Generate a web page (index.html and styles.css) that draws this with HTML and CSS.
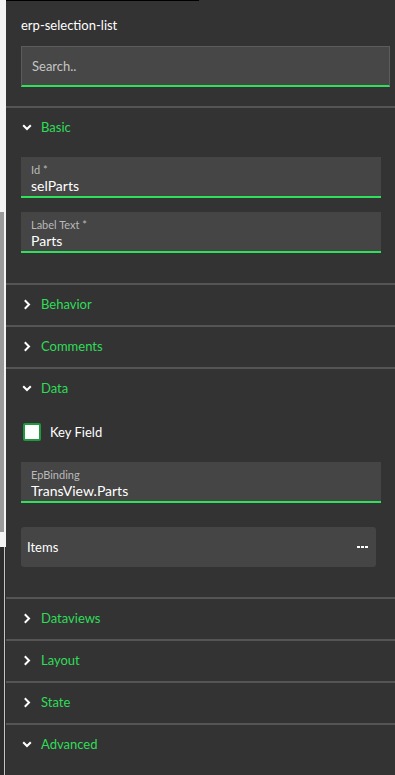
FILE: index.html
```html
<!DOCTYPE html>
<html lang="en">
<head>
    <meta charset="UTF-8">
    <meta name="viewport" content="width=device-width, initial-scale=1.0">
    <title>Properties</title>
    <link rel="stylesheet" href="styles.css">
</head>
<body>
    <div class="app">
        <div class="backdrop">
            <div class="bd-top"></div>
            <div class="bd-gray"></div>
            <div class="bd-white"></div>
            <div class="bd-dark"></div>
        </div>

        <div class="panel">
            <div class="topline"></div>
            <div class="panel-head">
                <div class="title">erp-selection-list</div>
                <input class="search" type="text" placeholder="Search..">
            </div>

            <section class="group">
                <div class="group-head">
                    <span class="chev"><svg width="10" height="7" viewBox="0 0 10 7"><path d="M1.2 1.2 L5 5 L8.8 1.2" fill="none" stroke="#fff" stroke-width="2"/></svg></span>
                    <span class="group-name">Basic</span>
                </div>
                <div class="group-body basic">
                    <div class="field">
                        <div class="field-label">Id *</div>
                        <div class="field-value">selParts</div>
                    </div>
                    <div class="field">
                        <div class="field-label">Label Text *</div>
                        <div class="field-value">Parts</div>
                    </div>
                </div>
            </section>

            <section class="group">
                <div class="group-head">
                    <span class="chev"><svg width="8" height="11" viewBox="0 0 8 11"><path d="M1.8 1.3 L6 5.5 L1.8 9.7" fill="none" stroke="#fff" stroke-width="2"/></svg></span>
                    <span class="group-name">Behavior</span>
                </div>
            </section>

            <section class="group">
                <div class="group-head">
                    <span class="chev"><svg width="8" height="11" viewBox="0 0 8 11"><path d="M1.8 1.3 L6 5.5 L1.8 9.7" fill="none" stroke="#fff" stroke-width="2"/></svg></span>
                    <span class="group-name">Comments</span>
                </div>
            </section>

            <section class="group">
                <div class="group-head">
                    <span class="chev"><svg width="10" height="7" viewBox="0 0 10 7"><path d="M1.2 1.2 L5 5 L8.8 1.2" fill="none" stroke="#fff" stroke-width="2"/></svg></span>
                    <span class="group-name">Data</span>
                </div>
                <div class="group-body data">
                    <label class="check-row">
                        <span class="checkbox"></span>
                        <span>Key Field</span>
                    </label>
                    <div class="field">
                        <div class="field-label">EpBinding</div>
                        <div class="field-value">TransView.Parts</div>
                    </div>
                    <div class="items">
                        <span>Items</span>
                        <span class="dots"><i></i><i></i><i></i></span>
                    </div>
                </div>
            </section>

            <section class="group">
                <div class="group-head">
                    <span class="chev"><svg width="8" height="11" viewBox="0 0 8 11"><path d="M1.8 1.3 L6 5.5 L1.8 9.7" fill="none" stroke="#fff" stroke-width="2"/></svg></span>
                    <span class="group-name">Dataviews</span>
                </div>
            </section>

            <section class="group">
                <div class="group-head">
                    <span class="chev"><svg width="8" height="11" viewBox="0 0 8 11"><path d="M1.8 1.3 L6 5.5 L1.8 9.7" fill="none" stroke="#fff" stroke-width="2"/></svg></span>
                    <span class="group-name">Layout</span>
                </div>
            </section>

            <section class="group">
                <div class="group-head">
                    <span class="chev"><svg width="8" height="11" viewBox="0 0 8 11"><path d="M1.8 1.3 L6 5.5 L1.8 9.7" fill="none" stroke="#fff" stroke-width="2"/></svg></span>
                    <span class="group-name">State</span>
                </div>
            </section>

            <section class="group">
                <div class="group-head">
                    <span class="chev"><svg width="10" height="7" viewBox="0 0 10 7"><path d="M1.2 1.2 L5 5 L8.8 1.2" fill="none" stroke="#fff" stroke-width="2"/></svg></span>
                    <span class="group-name">Advanced</span>
                </div>
            </section>
        </div>
    </div>
</body>
</html>
```

FILE: styles.css
```css
body {
    margin: 0;
    background-color: #333333;
    font-family: 'Lato', 'Liberation Sans', sans-serif;
    color: #ffffff;
    overflow: hidden;
}

.app {
    display: flex;
    height: 775px;
}

/* strip of the page behind the panel */
.backdrop {
    width: 6px;
    display: flex;
    flex-direction: column;
}

.bd-top {
    height: 212px;
    background-color: #f4f4f4;
}

.bd-gray {
    height: 320px;
    background-color: #9a9a9a;
    border-right: 2px solid #f4f4f4;
}

.bd-white {
    height: 15px;
    background-color: #f4f4f4;
}

.bd-dark {
    flex: 1;
    background: linear-gradient(to right, #2c2c2c 4px, #c4c4c4 4px, #c4c4c4 5px, #2c2c2c 5px);
}

.panel {
    flex: 1;
    background-color: #333333;
    display: flex;
    flex-direction: column;
}

.topline {
    width: 193px;
    height: 1px;
    background-color: #000;
}

.panel-head {
    padding: 15px 5px 19px 15px;
}

.title {
    font-size: 13px;
    line-height: 18px;
    margin-bottom: 12px;
}

.search {
    display: block;
    width: 100%;
    height: 41px;
    box-sizing: border-box;
    background-color: #474747;
    border: 1px solid #5c5c5c;
    border-bottom: 2px solid #2ee05a;
    padding: 0 10px;
    font-family: inherit;
    font-size: 13px;
    color: #fff;
    outline: none;
}

.search::placeholder {
    color: #c4c4c4;
}

.group {
    border-top: 2px solid #555555;
}

.group-head {
    height: 38px;
    padding: 0 15px 2px 15px;
    display: flex;
    align-items: center;
}

.chev {
    width: 12px;
    display: flex;
    justify-content: center;
    margin-right: 8px;
}

.chev svg {
    display: block;
}

.group-name {
    color: #2fdc58;
    font-size: 13px;
}

.group-body {
    padding: 9px 14px 30px 15px;
    display: flex;
    flex-direction: column;
}

.basic {
    gap: 14px;
}

.field {
    background-color: #454545;
    border-bottom: 2px solid #2ee05a;
    padding: 5px 10px 1px 10px;
}

.field-label {
    font-size: 11px;
    line-height: 15px;
    color: #b9b9b9;
}

.field-value {
    font-size: 14px;
    line-height: 18px;
}

.check-row {
    display: flex;
    align-items: center;
    height: 28px;
    padding-left: 2px;
    font-size: 13px;
    margin-bottom: 16px;
}

.checkbox {
    width: 14px;
    height: 14px;
    border: 2px solid #1f9a3e;
    border-radius: 2px;
    background-color: #fff;
    margin-right: 9px;
}

.items {
    margin-top: 24px;
    margin-right: 5px;
    height: 40px;
    background-color: #454545;
    border-radius: 3px;
    padding: 0 8px 0 6px;
    display: flex;
    align-items: center;
    justify-content: space-between;
    font-size: 13px;
}

.dots {
    display: flex;
    gap: 1px;
}

.dots i {
    width: 3px;
    height: 2px;
    background-color: #fff;
}
```
